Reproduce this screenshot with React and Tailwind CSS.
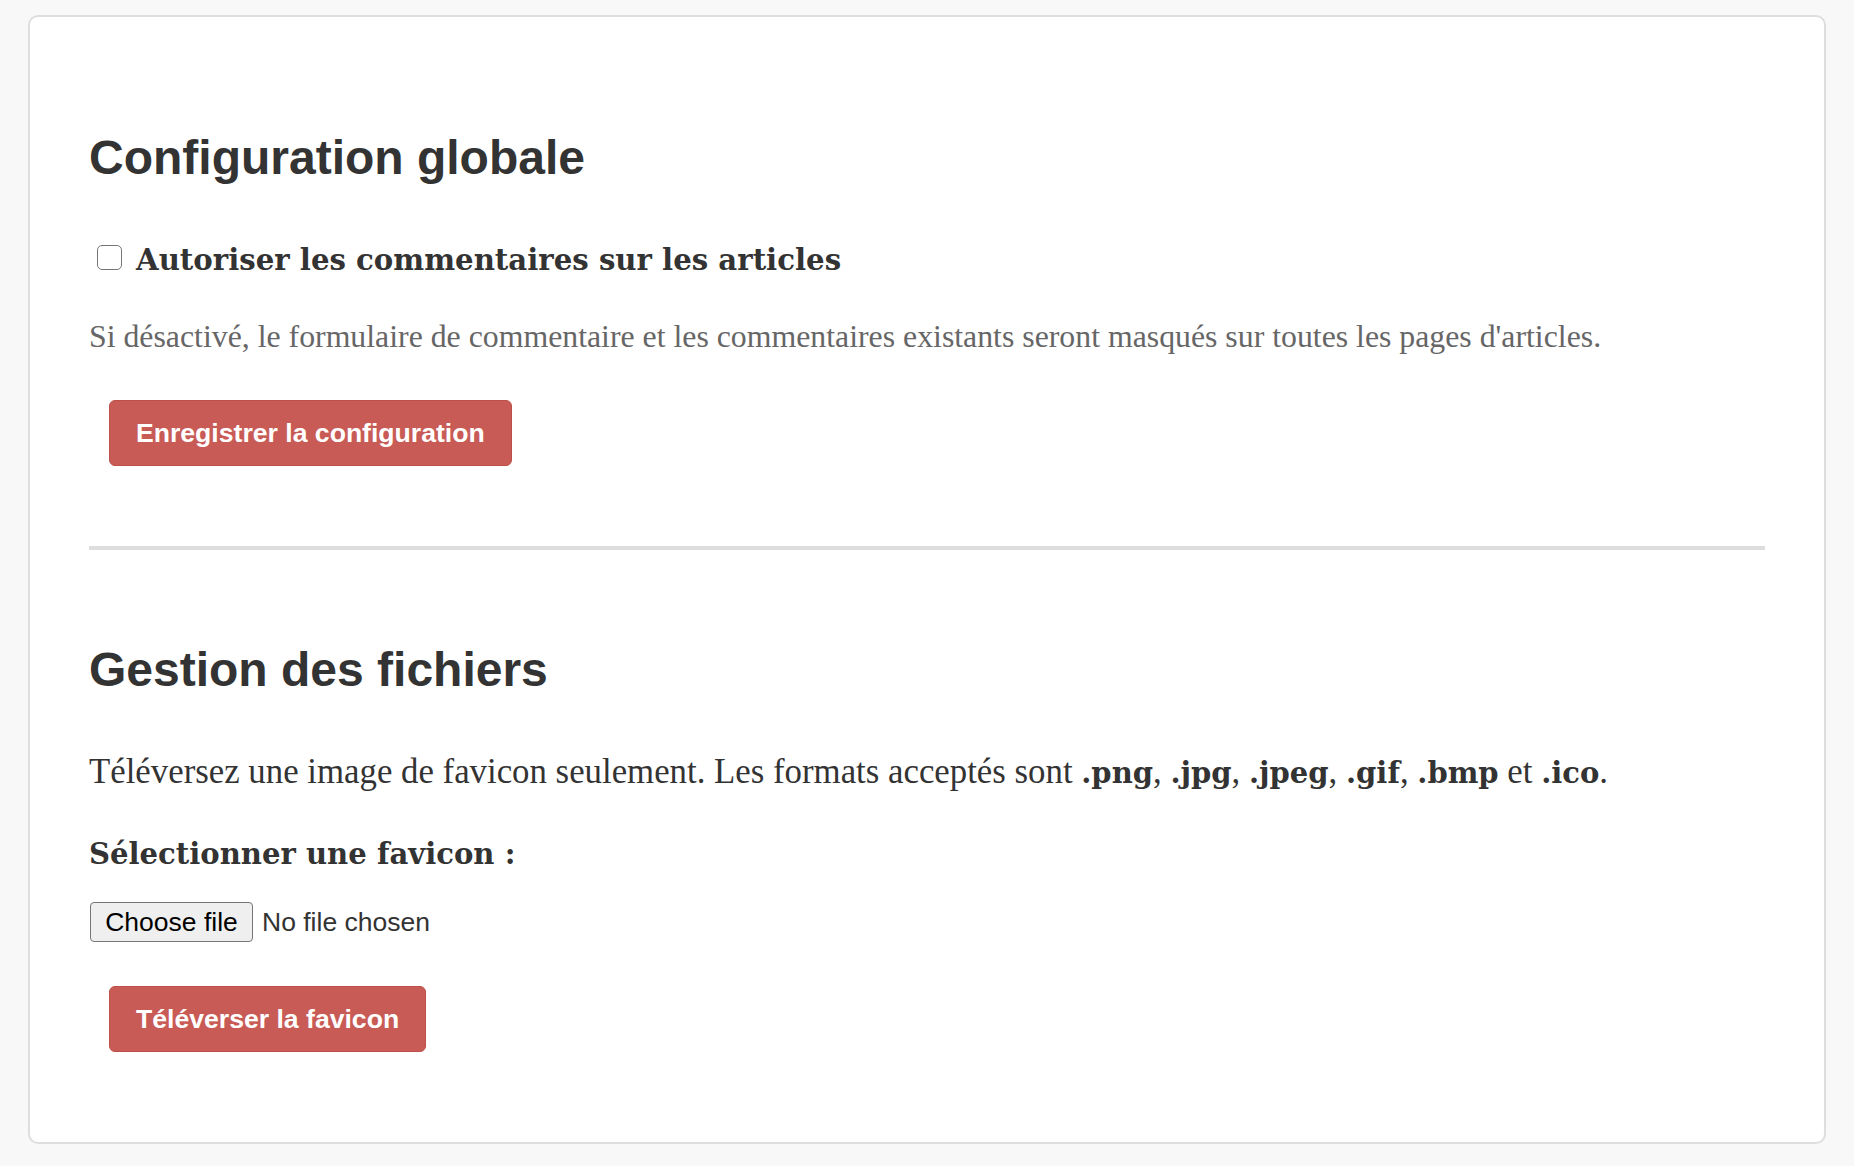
import React, { useState } from 'react';

const sans = 'font-["Liberation_Sans",Arial,sans-serif]';
const serif = 'font-["Liberation_Serif","Times_New_Roman",serif]';
const serifBold = 'font-["DejaVu_Serif",Georgia,serif] font-bold';

function RedButton({children}) {
    return (
        <button className={`${sans} ml-[20px] h-[66px] px-[26px] flex items-center bg-[#c85b55] border border-[#bf4f49] rounded-[6px] text-white text-[26.6px] font-bold leading-none`}>
            {children}
        </button>
    );
}

function FakeFileInput() {
    const [name, setName] = useState('');
    return (
        <label className={`${sans} flex items-center gap-[9px] cursor-pointer`}>
            <input type="file" className="hidden" onChange={(e) => setName(e.target.files?.[0]?.name || '')} />
            <span className="h-[40px] w-[163px] flex items-center justify-center bg-[#efefef] border-[1.5px] border-[#767676] rounded-[4px] text-black text-[26.5px] leading-none">
                Choose file
            </span>
            <span className="text-[#333333] text-[26.5px] leading-none">{name || 'No file chosen'}</span>
        </label>
    );
}

// extension names in the favicon hint
function Ext({children}) {
    return <b className={`${serifBold} text-[29px]`}>{children}</b>;
}

export default function App() {
    const [allowComments, setAllowComments] = useState(false);

    return (
        <div className="min-h-screen bg-[#f8f8f8] pt-[15px] px-[28px] pb-[23px]">
            <div className="bg-white border-2 border-[#dedede] rounded-[10px] px-[59px] pt-[112px] pb-[90px]">
                <h2 className={`${sans} text-[48px] leading-[58px] font-bold text-[#333333]`}>Configuration globale</h2>

                <label className="mt-[55px] flex items-center h-[36px]">
                    <input type="checkbox" checked={allowComments} onChange={(e) => setAllowComments(e.target.checked)}
                           className="appearance-none ml-[8px] mr-[14px] mt-[-5px] w-[25px] h-[25px] border-[1.5px] border-[#767676] rounded-[5px] bg-white checked:bg-[#c85b55]" />
                    <span className={`${serifBold} text-[29.2px] leading-[36px] text-[#333333]`}>
                        Autoriser les commentaires sur les articles
                    </span>
                </label>

                <p className={`${serif} mt-[39px] text-[31.8px] leading-[40px] text-[#666666]`}>
                    Si désactivé, le formulaire de commentaire et les commentaires existants seront masqués sur toutes les pages d'articles.
                </p>

                <div className="mt-[43px]">
                    <RedButton>Enregistrer la configuration</RedButton>
                </div>

                <hr className="mt-[80px] border-0 h-[4px] bg-[#dddddd]" />

                <h2 className={`${sans} mt-[91px] text-[48px] leading-[58px] font-bold text-[#333333]`}>Gestion des fichiers</h2>

                <p className={`${serif} mt-[52px] text-[34.8px] leading-[42px] text-[#333333]`}>
                    Téléversez une image de favicon seulement. Les formats acceptés sont <Ext>.png</Ext>, <Ext>.jpg</Ext>, <Ext>.jpeg</Ext>, <Ext>.gif</Ext>, <Ext>.bmp</Ext> et <Ext>.ico</Ext>.
                </p>

                <div className={`${serifBold} mt-[42px] text-[29.1px] leading-[36px] text-[#333333]`}>
                    Sélectionner une favicon :
                </div>

                <div className="mt-[30px] ml-[1px]">
                    <FakeFileInput />
                </div>

                <div className="mt-[44px]">
                    <RedButton>Téléverser la favicon</RedButton>
                </div>
            </div>
        </div>
    );
}
